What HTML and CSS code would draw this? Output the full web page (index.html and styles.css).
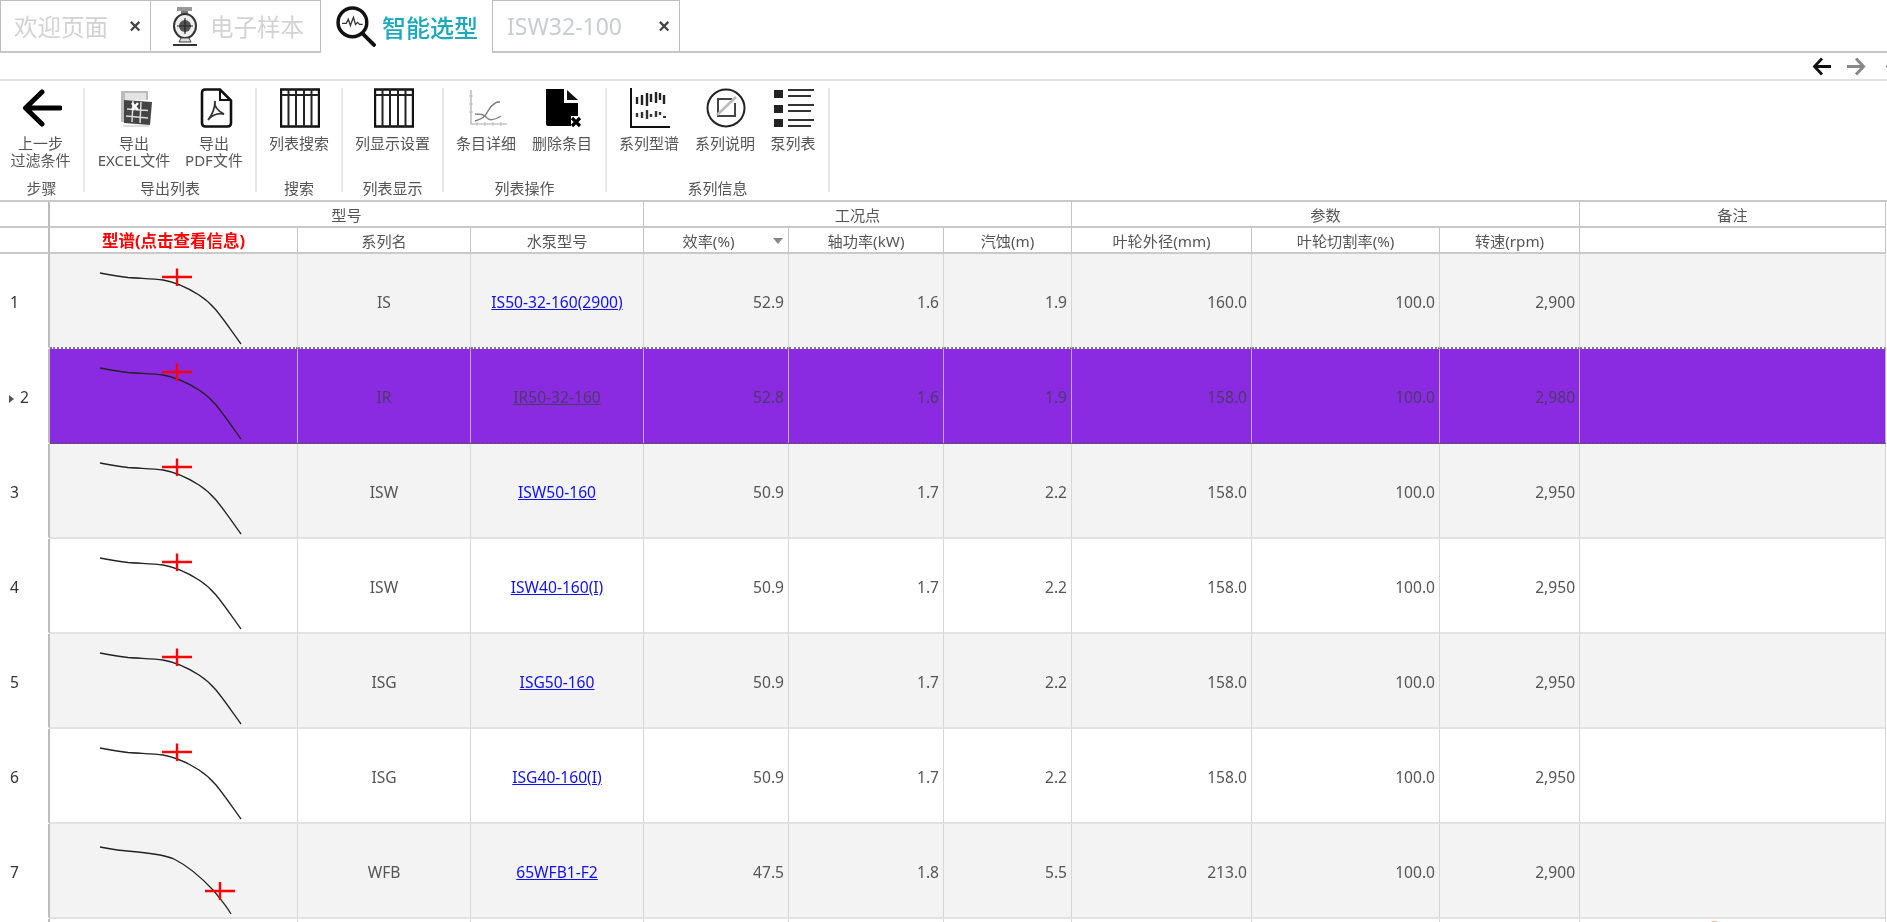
FILE: index.html
```html
<!DOCTYPE html>
<html lang="zh">
<head>
<meta charset="utf-8">
<title>智能选型</title>
<link rel="stylesheet" href="styles.css">
</head>
<body>
<svg class="defs" xmlns="http://www.w3.org/2000/svg">
  <symbol id="curve-a" viewBox="0 0 248 93">
    <path d="M50 19 C60 21 68 22.500 78 23.500 C92 24.500 104 24.500 113 26 C125 28 138 34 149 41 C156 45.500 161 50 166 56 C175 67 183 79 191 90" fill="none" stroke="#222" stroke-width="1.300"/>
    <path d="M112 23H142M127 14.500V32" fill="none" stroke="#f00" stroke-width="2.400"/>
  </symbol>
  <symbol id="curve-b" viewBox="0 0 248 93">
    <path d="M50 23 C62 25.500 75 27 88 28 C103 29.500 115 31 124 35 C136 41 150 52 164 67 C171 76 176 81 181 90" fill="none" stroke="#222" stroke-width="1.300"/>
    <path d="M155 67H185M170 58V76" fill="none" stroke="#f00" stroke-width="2.400"/>
  </symbol>
</svg>

<nav class="tabs">
  <div class="tab tab-welcome"><span class="tab-text">欢迎页面</span><span class="tab-close">×</span></div>
  <div class="tab tab-sample">
    <svg class="tab-icon-pump" viewBox="0 0 30 40" xmlns="http://www.w3.org/2000/svg">
      <path d="M7 1h15v4H7z" fill="#999"/>
      <path d="M11 5h7v4h-7z" fill="#777"/>
      <ellipse cx="15" cy="20" rx="11" ry="12" fill="#eee" stroke="#333" stroke-width="2"/>
      <circle cx="15" cy="20" r="6" fill="#555"/>
      <path d="M15 12v16M7 20h16" stroke="#222" stroke-width="1.200"/>
      <path d="M11 32l-2 4h12l-2-4z" fill="#ddd" stroke="#444"/>
      <path d="M3 39h24" stroke="#333" stroke-width="2"/>
    </svg>
    <span class="tab-text">电子样本</span>
  </div>
  <div class="tab tab-active">
    <svg class="tab-icon-search" viewBox="0 0 40 40" xmlns="http://www.w3.org/2000/svg">
      <circle cx="17" cy="16" r="14" fill="#fff" stroke="#111" stroke-width="3.400"/>
      <path d="M27 27l11 11" stroke="#111" stroke-width="3.800" stroke-linecap="round"/>
      <path d="M7 17h4l2-4 2 6 3-8 2 7 2-2 2 2h3" fill="none" stroke="#333" stroke-width="1.300"/>
    </svg>
    <span class="tab-title">智能选型</span>
  </div>
  <div class="tab tab-model"><span class="tab-text tab-latin">ISW32-100</span><span class="tab-close">×</span></div>
</nav>

<div class="pager">
  <svg class="pager-arrow" viewBox="0 0 20 19" xmlns="http://www.w3.org/2000/svg"><path d="M19 9.500H3M10 1.500L2.500 9.500l7.500 8" fill="none" stroke="#111" stroke-width="2.800"/></svg>
  <svg class="pager-arrow" viewBox="0 0 20 19" xmlns="http://www.w3.org/2000/svg"><path d="M1 9.500h16M10 1.500l7.500 8-7.500 8" fill="none" stroke="#888" stroke-width="3"/></svg>
  <svg class="pager-arrow pager-last" viewBox="0 0 20 19" xmlns="http://www.w3.org/2000/svg"><path d="M19 9.500H3M10 1.500L2.500 9.500l7.500 8" fill="none" stroke="#888" stroke-width="2.800"/></svg>
</div>

<section class="ribbon">
  <div class="group g-step">
    <div class="items">
      <div class="item item-wide">
        <svg class="icon" viewBox="0 0 40 40" xmlns="http://www.w3.org/2000/svg"><path d="M38 20H5M20 4L3.500 20 20 36" fill="none" stroke="#000" stroke-width="5" stroke-linecap="round" stroke-linejoin="round"/></svg>
        <span class="label">上一步<br>过滤条件</span>
      </div>
    </div>
    <div class="group-name">步骤</div>
  </div>
  <div class="group g-export">
    <div class="items">
      <div class="item item-80">
        <svg class="icon" viewBox="0 0 40 40" xmlns="http://www.w3.org/2000/svg">
          <path d="M6 3h27v9H10v22H6z" fill="#bbb"/>
          <path d="M10 5h21v7H10z" fill="#e4e4e4"/>
          <path d="M9 12l28 2-2 23-26-2z" fill="#444"/>
          <path d="M12 21l21 1.500M11 28l22 2M18 13l-1 21M26 14l-1 21" stroke="#ddd" stroke-width="1.500"/>
          <path d="M17 15l6 7M23 15l-6 7" stroke="#fff" stroke-width="2.500"/>
          <path d="M8 38h26" stroke="#ddd" stroke-width="2"/>
        </svg>
        <span class="label">导出<br>EXCEL文件</span>
      </div>
      <div class="item item-80">
        <svg class="icon" viewBox="0 0 40 40" xmlns="http://www.w3.org/2000/svg">
          <path d="M10 1.500h15l11 11V35q0 3.500-3.500 3.500h-22Q7 38.500 7 35V5q0-3.500 3-3.500z" fill="#fff" stroke="#111" stroke-width="2.600"/>
          <path d="M25 2v10h11" fill="none" stroke="#111" stroke-width="2"/>
          <path d="M20 13c-1 5 1 9 9 13-6-1-11 0-16 6 4-5 7-11 7-19z" fill="none" stroke="#333" stroke-width="1.800"/>
        </svg>
        <span class="label">导出<br>PDF文件</span>
      </div>
    </div>
    <div class="group-name">导出列表</div>
  </div>
  <div class="group g-search">
    <div class="items">
      <div class="item item-fill">
        <svg class="icon" viewBox="0 0 40 40" xmlns="http://www.w3.org/2000/svg"><path d="M1 1.500h38v37H1z" fill="none" stroke="#111" stroke-width="2.400"/><path d="M1 7h38M8.500 1v38M16 1v38M24 1v38M31.500 1v38" stroke="#222" stroke-width="2"/></svg>
        <span class="label">列表搜索</span>
      </div>
    </div>
    <div class="group-name">搜索</div>
  </div>
  <div class="group g-columns">
    <div class="items">
      <div class="item item-fill">
        <svg class="icon" viewBox="0 0 40 40" xmlns="http://www.w3.org/2000/svg"><path d="M1 1.500h38v37H1z" fill="none" stroke="#111" stroke-width="2.400"/><path d="M1 7h38M8.500 1v38M16 1v38M24 1v38M31.500 1v38" stroke="#222" stroke-width="2"/></svg>
        <span class="label">列显示设置</span>
      </div>
    </div>
    <div class="group-name">列表显示</div>
  </div>
  <div class="group g-actions">
    <div class="items">
      <div class="item item-76">
        <svg class="icon" viewBox="0 0 40 40" xmlns="http://www.w3.org/2000/svg">
          <path d="M4 2v34h36" fill="none" stroke="#aaa" stroke-width="1.200"/>
          <path d="M2 8h4M2 16h4M2 24h4M10 38v-4M18 38v-4M26 38v-4M34 38v-4" stroke="#bbb"/>
          <path d="M8 33c5-2 9-2 13-10 3-6 6-7 9-9h3" fill="none" stroke="#777" stroke-width="1.400"/>
          <path d="M8 26c5 0 9 0 12 4 2 2 6 3 14-2" fill="none" stroke="#888" stroke-width="1.400"/>
        </svg>
        <span class="label">条目详细</span>
      </div>
      <div class="item item-76">
        <svg class="icon" viewBox="0 0 40 40" xmlns="http://www.w3.org/2000/svg">
          <path d="M3 1h18v14h14v13h-7v10H5q-2 0-2-2z" fill="#000"/>
          <path d="M24 2l11 10H24z" fill="#111"/>
          <path d="M29 30l8 8M37 30l-8 8" stroke="#000" stroke-width="3.200"/>
        </svg>
        <span class="label">删除条目</span>
      </div>
    </div>
    <div class="group-name">列表操作</div>
  </div>
  <div class="group g-series">
    <div class="items">
      <div class="item item-76">
        <svg class="icon" viewBox="0 0 40 40" xmlns="http://www.w3.org/2000/svg">
          <path d="M1 0v39h39" fill="none" stroke="#111" stroke-width="2"/>
          <path d="M7 9v7M12 7v10M17 5v13M21 6v8M26 4v11M30 5v7M34 7v9" stroke="#222" stroke-width="2.400"/>
          <path d="M7 25v4M12 24v6M17 22v9M21 26v3M26 23v6M30 24v3" stroke="#333" stroke-width="2.400"/>
          <path d="M33 29h3" stroke="#333" stroke-width="2"/>
        </svg>
        <span class="label">系列型谱</span>
      </div>
      <div class="item item-76">
        <svg class="icon" viewBox="0 0 40 40" xmlns="http://www.w3.org/2000/svg">
          <circle cx="20" cy="20" r="18.500" fill="none" stroke="#222" stroke-width="2"/>
          <path d="M26 11H12v17h17V15" fill="none" stroke="#444" stroke-width="2"/>
          <path d="M11 27L30 9" stroke="#bbb" stroke-width="2.600"/>
        </svg>
        <span class="label">系列说明</span>
      </div>
      <div class="item item-60">
        <svg class="icon" viewBox="0 0 40 40" xmlns="http://www.w3.org/2000/svg">
          <path d="M0 2h9v8H0zM0 17h9v8H0zM0 31h9v8H0z" fill="#222" />
          <path d="M14 2h26M14 8h23M14 17h26M14 23h23M14 32h26M14 38h23" stroke="#333" stroke-width="2.200"/>
        </svg>
        <span class="label">泵列表</span>
      </div>
    </div>
    <div class="group-name">系列信息</div>
  </div>
</section>

<main class="grid-wrap">
  <table class="grid">
    <colgroup>
      <col class="c-head"><col class="c-curve"><col class="c-series"><col class="c-model"><col class="c-eff"><col class="c-power"><col class="c-npsh"><col class="c-dia"><col class="c-trim"><col class="c-rpm"><col class="c-note">
    </colgroup>
    <thead>
      <tr class="band">
        <th class="rowhead"></th>
        <th colspan="3">型号</th>
        <th colspan="3">工况点</th>
        <th colspan="3">参数</th>
        <th>备注</th>
      </tr>
      <tr class="fields">
        <th class="rowhead"></th>
        <th class="curve-title">型谱(点击查看信息)</th>
        <th>系列名</th>
        <th>水泵型号</th>
        <th class="sorted">效率(%)<span class="sort-mark"></span></th>
        <th>轴功率(kW)</th>
        <th>汽蚀(m)</th>
        <th>叶轮外径(mm)</th>
        <th>叶轮切割率(%)</th>
        <th>转速(rpm)</th>
        <th></th>
      </tr>
    </thead>
    <tbody>
      <tr class="alt before-selected">
        <td class="rowhead">1</td>
        <td class="curve"><svg class="curve-svg"><use href="#curve-a"/></svg></td>
        <td class="mid">IS</td><td class="mid"><a href="#">IS50-32-160(2900)</a></td>
        <td class="num">52.9</td><td class="num">1.6</td><td class="num">1.9</td><td class="num">160.0</td><td class="num">100.0</td><td class="num">2,900</td><td></td>
      </tr>
      <tr class="selected">
        <td class="rowhead rowhead-current"><span class="row-pointer"></span>2</td>
        <td class="curve"><svg class="curve-svg"><use href="#curve-a"/></svg></td>
        <td class="mid">IR</td><td class="mid"><a href="#">IR50-32-160</a></td>
        <td class="num">52.8</td><td class="num">1.6</td><td class="num">1.9</td><td class="num">158.0</td><td class="num">100.0</td><td class="num">2,980</td><td></td>
      </tr>
      <tr class="alt">
        <td class="rowhead">3</td>
        <td class="curve"><svg class="curve-svg"><use href="#curve-a"/></svg></td>
        <td class="mid">ISW</td><td class="mid"><a href="#">ISW50-160</a></td>
        <td class="num">50.9</td><td class="num">1.7</td><td class="num">2.2</td><td class="num">158.0</td><td class="num">100.0</td><td class="num">2,950</td><td></td>
      </tr>
      <tr>
        <td class="rowhead">4</td>
        <td class="curve"><svg class="curve-svg"><use href="#curve-a"/></svg></td>
        <td class="mid">ISW</td><td class="mid"><a href="#">ISW40-160(I)</a></td>
        <td class="num">50.9</td><td class="num">1.7</td><td class="num">2.2</td><td class="num">158.0</td><td class="num">100.0</td><td class="num">2,950</td><td></td>
      </tr>
      <tr class="alt">
        <td class="rowhead">5</td>
        <td class="curve"><svg class="curve-svg"><use href="#curve-a"/></svg></td>
        <td class="mid">ISG</td><td class="mid"><a href="#">ISG50-160</a></td>
        <td class="num">50.9</td><td class="num">1.7</td><td class="num">2.2</td><td class="num">158.0</td><td class="num">100.0</td><td class="num">2,950</td><td></td>
      </tr>
      <tr>
        <td class="rowhead">6</td>
        <td class="curve"><svg class="curve-svg"><use href="#curve-a"/></svg></td>
        <td class="mid">ISG</td><td class="mid"><a href="#">ISG40-160(I)</a></td>
        <td class="num">50.9</td><td class="num">1.7</td><td class="num">2.2</td><td class="num">158.0</td><td class="num">100.0</td><td class="num">2,950</td><td></td>
      </tr>
      <tr class="alt">
        <td class="rowhead">7</td>
        <td class="curve"><svg class="curve-svg"><use href="#curve-b"/></svg></td>
        <td class="mid">WFB</td><td class="mid"><a href="#">65WFB1-F2</a></td>
        <td class="num">47.5</td><td class="num">1.8</td><td class="num">5.5</td><td class="num">213.0</td><td class="num">100.0</td><td class="num">2,900</td><td></td>
      </tr>
      <tr>
        <td class="rowhead"></td><td></td><td></td><td></td><td></td><td></td><td></td><td></td><td></td><td></td><td class="note-marked"><span class="note-mark"></span></td>
      </tr>
    </tbody>
  </table>
</main>
</body>
</html>
```
FILE: styles.css
```css
* {
  box-sizing: border-box;
}

html,
body {
  margin: 0;
  height: 922px;
  overflow: hidden;
  background: #fff;
}

body {
  font-family: "Noto Sans", "Noto Sans CJK SC", sans-serif;
  font-size: 15.200px;
  color: #555;
  filter: blur(0.35px);
}

.defs {
  display: none;
}

/* Tabs */
.tabs {
  display: flex;
  align-items: flex-end;
  height: 53px;
  border-bottom: 2px solid #c6c6c6;
}

.tab {
  display: flex;
  align-items: center;
  height: 51px;
  border: 1px solid #bdbdbd;
  border-bottom: 0;
  border-left: 0;
  font-family: "Noto Sans CJK SC", sans-serif;
}

.tab-welcome {
  width: 151px;
  padding-left: 13px;
  border-left: 1px solid #bdbdbd;
}

.tab-sample {
  width: 170px;
  padding-left: 19px;
  gap: 10px;
}

.tab-active {
  width: 172px;
  height: 53px;
  margin-bottom: -2px;
  padding-left: 14px;
  gap: 6px;
  background: #fff;
  border-top: 0;
}

.tab-model {
  width: 187px;
  padding-left: 14px;
}

.tab-text {
  font-size: 23.500px;
  color: #d2d2d2;
  white-space: nowrap;
}

.tab-latin {
  font-family: "Noto Sans", sans-serif;
  font-size: 23px;
  color: #c9ccd0;
}

.tab-title {
  font-size: 24px;
  font-weight: 500;
  color: #1da9bd;
  white-space: nowrap;
}

.tab-close {
  margin-left: auto;
  margin-right: 8px;
  width: 14px;
  text-align: center;
  font-family: "Liberation Sans", sans-serif;
  font-size: 20px;
  font-weight: 700;
  color: #444;
}

.tab-icon-pump {
  width: 30px;
  height: 40px;
}

.tab-icon-search {
  width: 41px;
  height: 41px;
}

/* Pager arrows */
.pager {
  display: flex;
  justify-content: flex-end;
  align-items: center;
  gap: 14px;
  height: 28px;
  margin-right: -18px;
  border-bottom: 2px solid #e0e0e0;
}

.pager-arrow {
  width: 20px;
  height: 19px;
  flex: none;
}

.pager-last {
  margin-left: 5px;
}

/* Ribbon */
.ribbon {
  display: flex;
  height: 121px;
  border-bottom: 2px solid #c8c8c8;
}

.group {
  display: flex;
  flex-direction: column;
  padding-top: 7px;
  position: relative;
}

.group::after {
  content: "";
  position: absolute;
  right: 0;
  top: 7px;
  bottom: 8px;
  width: 2px;
  background: #e8e8e8;
}

.g-step { width: 85px; }
.g-export { width: 172px; padding-left: 10px; }
.g-search { width: 86px; }
.g-columns { width: 101px; }
.g-actions { width: 163px; padding-left: 5px; }
.g-series { width: 223px; padding-left: 5px; }

.items {
  display: flex;
  flex: 1;
}

.item {
  display: flex;
  flex-direction: column;
  align-items: center;
}

.item-wide,
.item-fill { width: 100%; }
.item-wide { padding-right: 2px; }
.item-80 { width: 80px; }
.item-76 { width: 76px; }
.item-60 { width: 60px; }

.icon {
  width: 40px;
  height: 40px;
  flex: none;
}

.label {
  margin-top: 7px;
  margin-right: 2px;
  text-align: center;
  font-size: 15px;
  line-height: 17px;
  white-space: nowrap;
}

.group-name {
  height: 21px;
  padding-right: 2px;
  text-align: center;
  font-size: 15px;
  line-height: 18px;
}

.g-export .group-name { margin-left: -10px; }
.g-actions .group-name,
.g-series .group-name { margin-left: -5px; }

/* Grid */
.grid-wrap {
  height: 720px;
  overflow: hidden;
}

.grid {
  table-layout: fixed;
  width: 1886px;
  border-collapse: separate;
  border-spacing: 0;
}

.c-head { width: 50px; }
.c-curve { width: 248px; }
.c-series { width: 173px; }
.c-model { width: 173px; }
.c-eff { width: 145px; }
.c-power { width: 155px; }
.c-npsh { width: 128px; }
.c-dia { width: 180px; }
.c-trim { width: 188px; }
.c-rpm { width: 140px; }
.c-note { width: 306px; }

th {
  padding: 0;
  font-weight: 400;
  text-align: center;
  white-space: nowrap;
  border-right: 1px solid #c4c4c4;
  border-bottom: 2px solid #cacaca;
}

.band th {
  height: 26px;
}

.fields th {
  height: 26px;
}

.fields .curve-title {
  color: #f00;
  font-size: 16.500px;
  font-weight: 700;
}

.sorted {
  position: relative;
  padding-right: 15px;
}

.sort-mark {
  position: absolute;
  right: 5px;
  top: 10px;
  border-left: 5px solid transparent;
  border-right: 5px solid transparent;
  border-top: 6px solid #888;
}

td {
  height: 95px;
  padding: 0;
  font-size: 15.600px;
  border-right: 1px solid #d6d6d6;
  border-bottom: 2px solid #e2e2e2;
  white-space: nowrap;
}

.rowhead {
  border-right: 2px solid #bcbcbc;
  border-bottom-color: transparent;
  background: #fff;
  color: #333;
}

th.rowhead {
  border-bottom-color: #cacaca;
}

td.rowhead {
  padding-top: 2px;
  padding-left: 10px;
}

td.rowhead-current {
  padding-left: 9px;
}

.row-pointer {
  display: inline-block;
  margin-right: 6px;
  border-top: 4px solid transparent;
  border-bottom: 4px solid transparent;
  border-left: 5px solid #555;
}

.alt td {
  background: #f3f3f3;
}

.alt td.rowhead {
  background: #fff;
}

.curve {
  vertical-align: top;
}

.curve-svg {
  display: block;
  width: 248px;
  height: 93px;
}

.mid {
  padding-top: 2px;
  text-align: center;
}

.num {
  padding-top: 2px;
  padding-right: 4px;
  text-align: right;
}

a {
  color: #1111ee;
}

.before-selected td:not(.rowhead) {
  border-bottom: 2px dotted #7d7d7d;
}

.selected td {
  background: #8a2be2;
  color: #4b3a66;
  border-right-color: #c6a6ee;
  border-bottom: 2px dotted #5f4a80;
}

.selected a {
  color: #4b3a66;
}

.selected .rowhead {
  background: #fff;
  color: #333;
  border-right-color: #bcbcbc;
  border-bottom-color: transparent;
}

.note-marked {
  position: relative;
}

.note-mark {
  position: absolute;
  left: 131px;
  top: 2px;
  width: 7px;
  height: 3px;
  border-radius: 50%;
  background: #f5a58a;
}
```
